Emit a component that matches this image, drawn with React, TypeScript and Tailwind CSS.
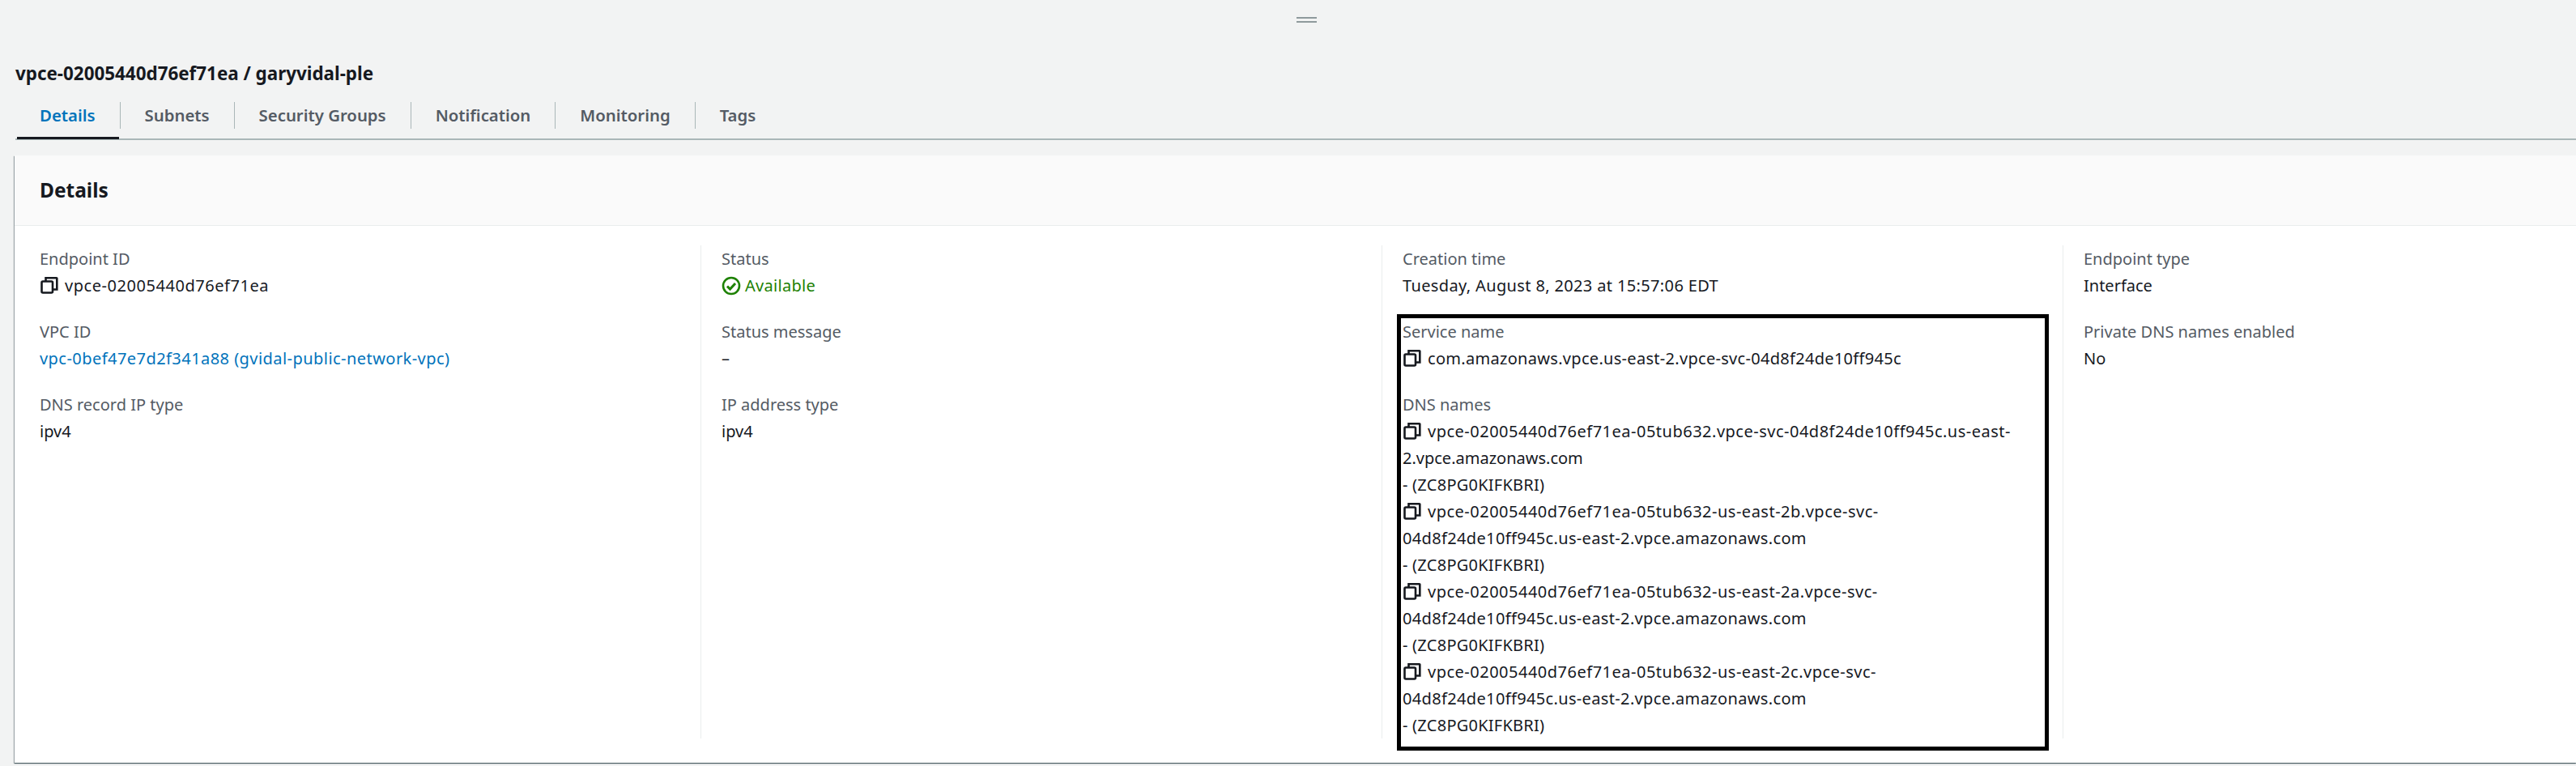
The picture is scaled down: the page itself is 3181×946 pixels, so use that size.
const font = "font-['Noto_Sans',sans-serif]";

function CopyIcon({ className = "" }: { className?: string }) {
  return (
    <svg viewBox="0 0 22 22" className={`w-[22px] h-[22px] shrink-0 ${className}`} fill="none" stroke="#16191f" strokeWidth="2.6">
      <rect x="1.500" y="6.500" width="13.500" height="14" rx="1.500" />
      <path d="M6.500 6V2.200h13.200a.6.6 0 0 1 .6.6V16.500H15.500" />
    </svg>
  );
}

function Label({ children }: { children: React.ReactNode }) {
  return <div className="text-[#545b64] h-[33px] leading-[33px]">{children}</div>;
}

function Item({ label, children }: { label: string; children: React.ReactNode }) {
  return (
    <div className="mb-[24px]">
      <Label>{label}</Label>
      <div className="h-[33px] leading-[33px] text-[#16191f]">{children}</div>
    </div>
  );
}

function Copy({ children }: { children: React.ReactNode }) {
  return (
    <span>
      <CopyIcon className="inline-block align-[-3px] ml-[1px] mr-[8px]" />
      {children}
    </span>
  );
}

const tabs = ["Details", "Subnets", "Security Groups", "Notification", "Monitoring", "Tags"];

function Dns({ a, b, bt }: { a: string; b: string; bt: string }) {
  return (
    <div>
      <div className="tracking-[0.5px]"><Copy>{a}</Copy></div>
      <div className={bt}>{b}</div>
      <div className="tracking-[0.24px]">- (ZC8PG0KIFKBRI)</div>
    </div>
  );
}

const tail = "04d8f24de10ff945c.us-east-2.vpce.amazonaws.com";

export default function App() {
  return (
    <div className={`${font} w-[3181px] h-[946px] overflow-hidden bg-[#f2f3f3] text-[20px] text-[#16191f]`}>
      <div className="h-[75px] pl-[1601px] pt-[21px]">
        <div className="w-[25px] h-[7px] border-y-2 border-[#8f9a9c]" />
      </div>
      <h2 className="pl-[19px] h-[32px] leading-[32px] text-[22.4px] font-bold text-[#16191f]">vpce-02005440d76ef71ea / garyvidal-ple</h2>
      <div className="ml-[19px] mt-[16px] flex border-b-2 border-[#aab7b8] h-[50px]">
        {tabs.map((t, i) => (
          <div key={t} className="relative h-[48px] pt-[3px]">
            <div className={`h-[33px] leading-[33px] px-[30px] text-[20.35px] font-semibold ${i === 0 ? "text-[#0073bb]" : "text-[#545b64]"} ${i < 5 ? "border-r border-[#aab7b8]" : ""}`}>{t}</div>
            {i === 0 && <div className="absolute left-[2px] right-[2px] bottom-[-1px] h-[3px] bg-[#16191f]" />}
          </div>
        ))}
      </div>
      <div className="ml-[18px] mt-[19px] w-[3163px] h-[750px] bg-white shadow-[0_1px_1px_0_rgba(0,28,36,0.5),1px_1px_1px_0_rgba(0,28,36,0.1),-1px_1px_1px_0_rgba(0,28,36,0.3)]">
        <div className="h-[87px] bg-[#fafafa] border-b border-[#eaeded] pl-[31px] flex items-center">
          <h3 className="text-[24.5px] font-bold">Details</h3>
        </div>
        <div className="mt-[24px] ml-[6px] grid grid-cols-[841px_841px_841px_1fr] h-[609px]">
          <div className="pl-[25px]">
            <Item label="Endpoint ID"><span className="tracking-[0.55px]"><Copy>vpce-02005440d76ef71ea</Copy></span></Item>
            <Item label="VPC ID"><span className="text-[#0073bb] tracking-[0.45px]">vpc-0bef47e7d2f341a88 (gvidal-public-network-vpc)</span></Item>
            <Item label="DNS record IP type">ipv4</Item>
          </div>
          <div className="pl-[25px] border-l border-[#eaeded]">
            <Item label="Status">
              <span className="text-[#1d8102] h-[33px] flex items-center gap-[5px] tracking-[0.3px]">
                <svg viewBox="0 0 24 24" className="w-[24px] h-[24px]" fill="none" stroke="#1d8102" strokeWidth="2.6">
                  <circle cx="12" cy="12" r="10" />
                  <path d="M7 12.500l3.500 3.500L17 9" strokeWidth="3" />
                </svg>
                Available
              </span>
            </Item>
            <Item label="Status message">–</Item>
            <Item label="IP address type">ipv4</Item>
          </div>
          <div className="pl-[25px] border-l border-[#eaeded]">
            <Item label="Creation time"><span className="tracking-[0.36px]">Tuesday, August 8, 2023 at 15:57:06 EDT</span></Item>
            <div className="relative">
              <Item label="Service name"><span className="tracking-[0.3px]"><Copy>com.amazonaws.vpce.us-east-2.vpce-svc-04d8f24de10ff945c</Copy></span></Item>
              <Label>DNS names</Label>
              <div className="leading-[33px] w-[790px]">
                <Dns a="vpce-02005440d76ef71ea-05tub632.vpce-svc-04d8f24de10ff945c.us-east-" b="2.vpce.amazonaws.com" bt="tracking-normal" />
                <Dns a="vpce-02005440d76ef71ea-05tub632-us-east-2b.vpce-svc-" b={tail} bt="tracking-[0.35px]" />
                <Dns a="vpce-02005440d76ef71ea-05tub632-us-east-2a.vpce-svc-" b={tail} bt="tracking-[0.35px]" />
                <Dns a="vpce-02005440d76ef71ea-05tub632-us-east-2c.vpce-svc-" b={tail} bt="tracking-[0.35px]" />
              </div>
              <div className="absolute left-[-7px] top-[-5px] w-[805px] h-[539px] border-x-[5px] border-y-[5px] border-black" />
            </div>
          </div>
          <div className="pl-[25px] border-l border-[#eaeded]">
            <Item label="Endpoint type">Interface</Item>
            <Item label="Private DNS names enabled">No</Item>
          </div>
        </div>
      </div>
    </div>
  );
}
